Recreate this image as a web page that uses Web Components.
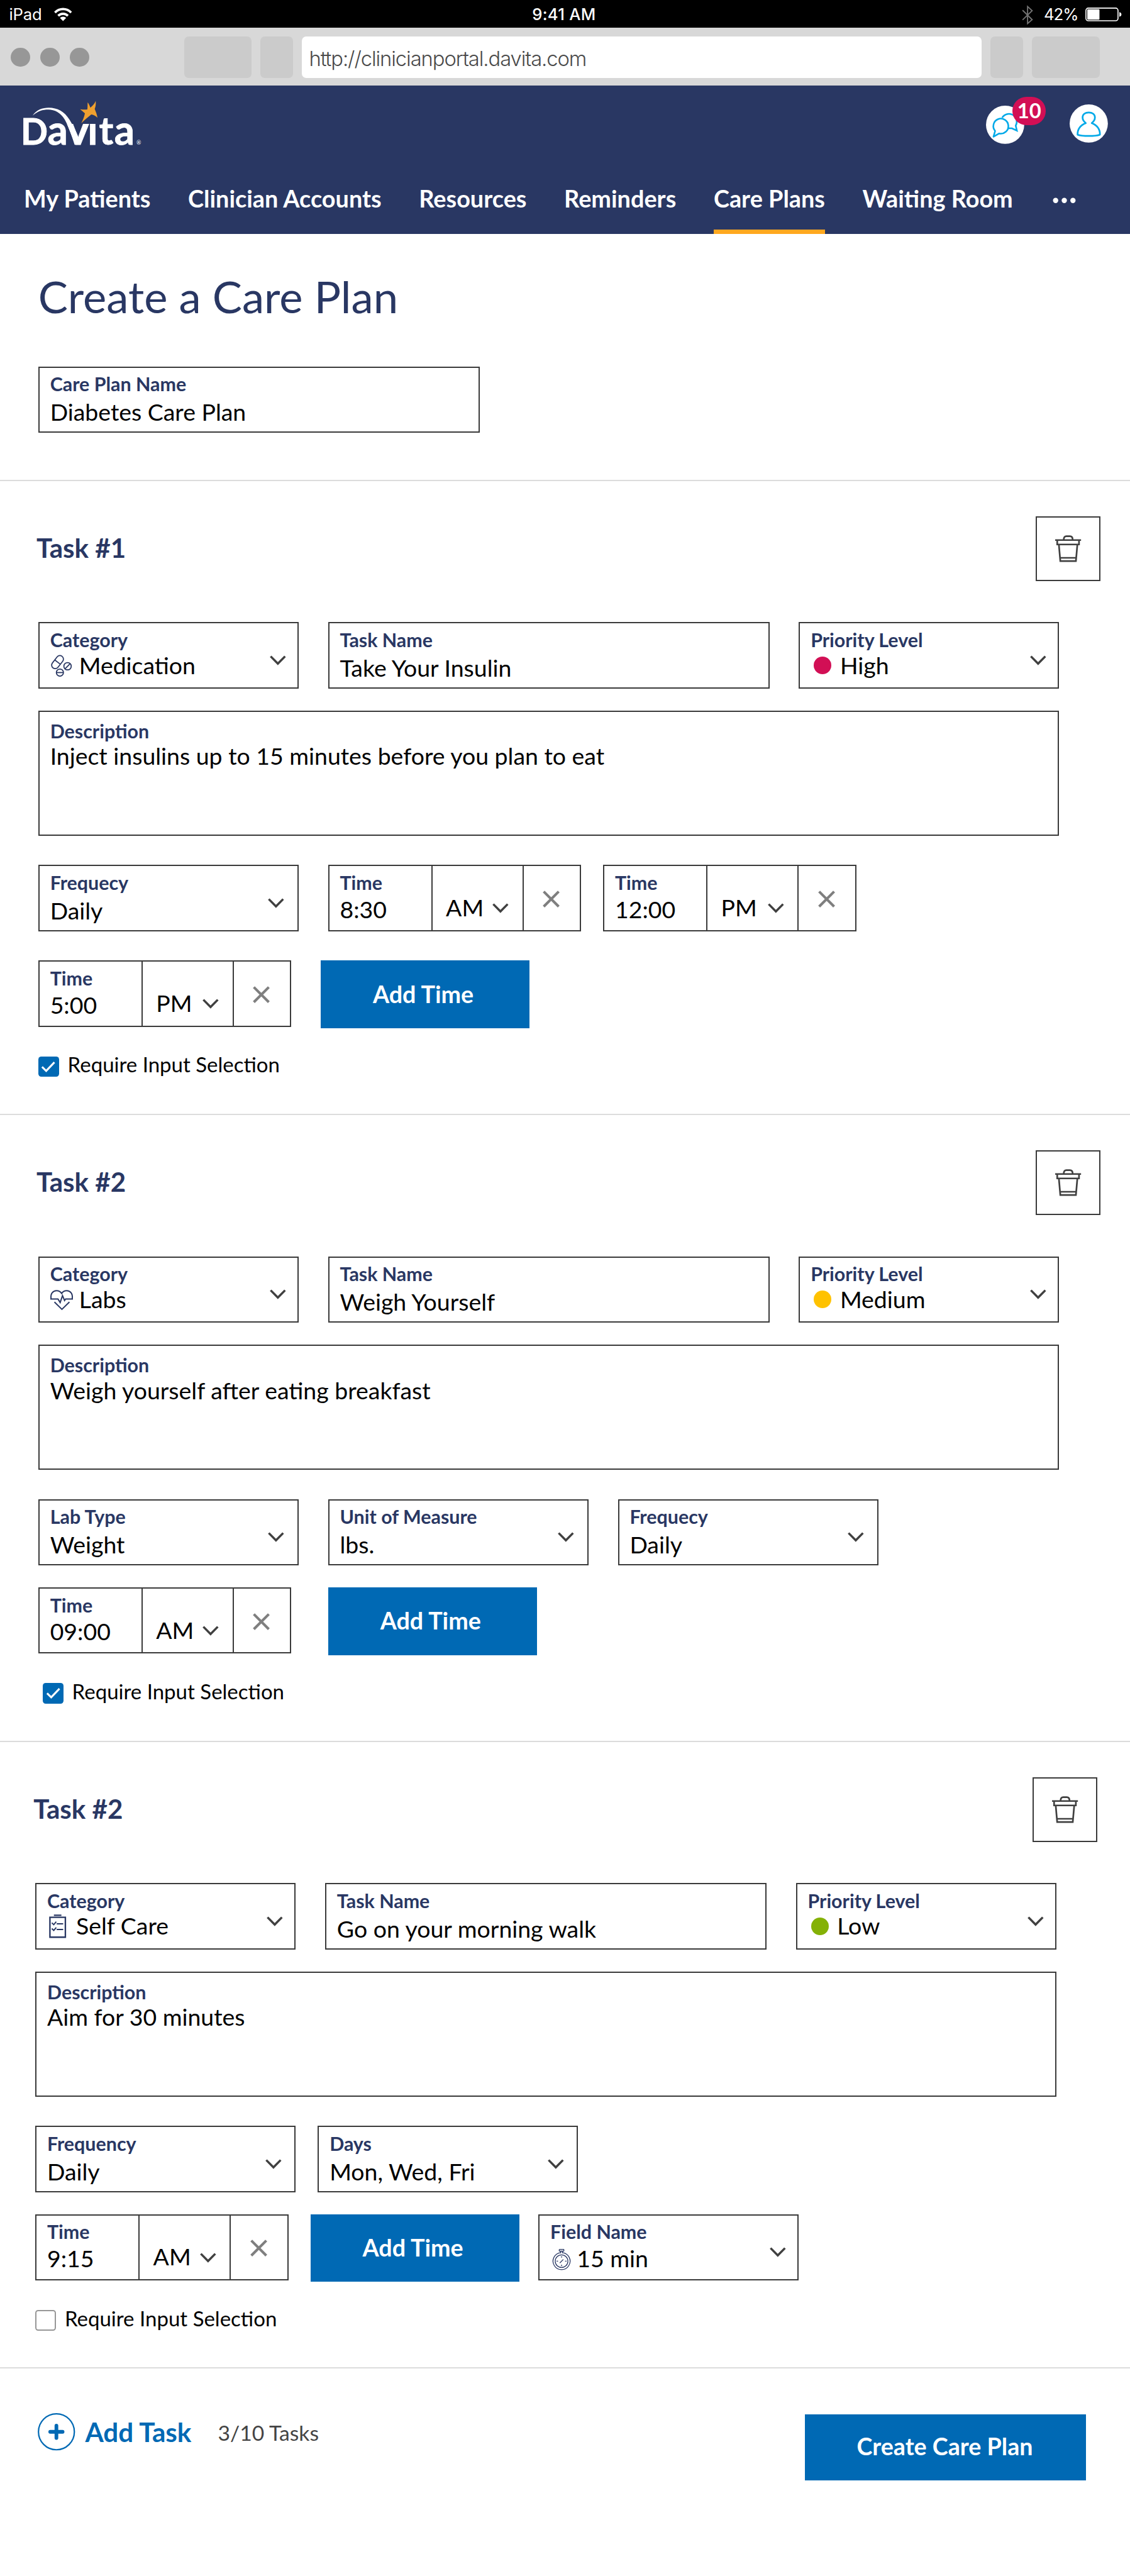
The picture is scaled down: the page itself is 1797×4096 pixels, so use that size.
<!DOCTYPE html>
<html lang="en">
<head>
<meta charset="utf-8">
<title>Create a Care Plan</title>
<style>
  /* 1rem = 10 design pixels on a 768-wide tablet canvas */
  html { font-size: 23.395px; background: #fff; }
  body { margin: 0; height: 4096px; overflow: hidden; font-family: Lato, "Noto Sans", sans-serif; color: #000; }
</style>
</head>
<body>
<status-bar></status-bar>
<browser-bar>http://clinicianportal.davita.com</browser-bar>
<portal-header unread="10">
  <nav-tab>My Patients</nav-tab>
  <nav-tab>Clinician Accounts</nav-tab>
  <nav-tab>Resources</nav-tab>
  <nav-tab>Reminders</nav-tab>
  <nav-tab active>Care Plans</nav-tab>
  <nav-tab>Waiting Room</nav-tab>
</portal-header>

<plan-intro heading="Create a Care Plan">
  <form-field label="Care Plan Name" size="wide">Diabetes Care Plan</form-field>
</plan-intro>

<task-card heading="Task #1" size="tall">
  <form-row top="28">
    <form-field label="Category" kind="select" icon="pills">Medication</form-field>
    <form-field label="Task Name" size="wide">Take Your Insulin</form-field>
    <form-field label="Priority Level" kind="select" dot="#d20f55">High</form-field>
  </form-row>
  <form-row top="15">
    <form-field label="Description" kind="area">Inject insulins up to 15 minutes before you plan to eat</form-field>
  </form-row>
  <form-row top="20">
    <form-field label="Frequecy" kind="select">Daily</form-field>
    <time-field meridiem="AM">8:30</time-field>
    <time-field meridiem="PM" pull="5">12:00</time-field>
  </form-row>
  <form-row top="20">
    <time-field meridiem="PM">5:00</time-field>
    <action-button>Add Time</action-button>
  </form-row>
  <check-option checked>Require Input Selection</check-option>
</task-card>

<task-card heading="Task #2">
  <form-row top="28">
    <form-field label="Category" kind="select" icon="heart">Labs</form-field>
    <form-field label="Task Name" size="wide">Weigh Yourself</form-field>
    <form-field label="Priority Level" kind="select" dot="#ffc200">Medium</form-field>
  </form-row>
  <form-row top="15">
    <form-field label="Description" kind="area">Weigh yourself after eating breakfast</form-field>
  </form-row>
  <form-row top="20">
    <form-field label="Lab Type" kind="select">Weight</form-field>
    <form-field label="Unit of Measure" kind="select">lbs.</form-field>
    <form-field label="Frequecy" kind="select">Daily</form-field>
  </form-row>
  <form-row top="15">
    <time-field meridiem="AM">09:00</time-field>
    <action-button pull="-5">Add Time</action-button>
  </form-row>
  <check-option checked inset>Require Input Selection</check-option>
</task-card>

<task-card heading="Task #2" outdent>
  <form-row top="28">
    <form-field label="Category" kind="select" icon="clipboard">Self Care</form-field>
    <form-field label="Task Name" size="wide">Go on your morning walk</form-field>
    <form-field label="Priority Level" kind="select" dot="#84b106">Low</form-field>
  </form-row>
  <form-row top="15">
    <form-field label="Description" kind="area">Aim for 30 minutes</form-field>
  </form-row>
  <form-row top="20" gap="15">
    <form-field label="Frequency" kind="select">Daily</form-field>
    <form-field label="Days" kind="select">Mon, Wed, Fri</form-field>
  </form-row>
  <form-row top="15" gap="15">
    <time-field meridiem="AM">9:15</time-field>
    <action-button>Add Time</action-button>
    <form-field label="Field Name" kind="select" icon="stopwatch" pull="2">15 min</form-field>
  </form-row>
  <check-option>Require Input Selection</check-option>
</task-card>

<plan-footer count="3/10 Tasks">
  <action-button size="wide">Create Care Plan</action-button>
</plan-footer>

<script>
// Lengths are authored in design pixels with a "u" suffix and emitted as rem.
const units = text => text.replace(/(-?\d*\.?\d+)u\b/g, (_, n) => (n / 10).toFixed(4) + 'rem');

class Base extends HTMLElement {
  connectedCallback() {
    if (this.shadowRoot) return;
    const root = this.attachShadow({ mode: 'open' });
    const pull = this.getAttribute('pull');
    const extra = pull ? `:host{margin-left:${-pull}u}` : '';
    root.innerHTML = units(`<style>*{box-sizing:border-box}:host{display:block;box-sizing:border-box}${this.css()}${extra}</style>`) + this.html();
  }
  attr(name, fallback = '') { return this.getAttribute(name) ?? fallback; }
}

const ICONS = {
  chevron: [11, 6.7, '<path d="M.6 .7 5.5 5.7 10.4 .7" fill="none" stroke="#404040" stroke-width="1.5"/>'],
  close: [11.6, 11.6, '<path d="M.7 .7 10.9 10.9M10.9 .7 .7 10.9" fill="none" stroke="#7f7f7f" stroke-width="1.8"/>'],
  trash: [17.6, 18.2, '<g fill="none" stroke="#404040" stroke-width="1.15"><path d="M0 3.3H17.6M5.8 3.1C5.8 1.3 6.6.7 7.6.7H10C11.1.7 11.9 1.3 11.9 3.1M1.4 3.3V6.3H16.2V3.3M2.5 6.3 3.5 17.6H14.1L15.1 6.3M3.3 15.4H14.3"/></g>'],
  pills: [14, 14, '<g fill="none" stroke="#293763" stroke-width=".75"><rect x="-5" y="-2.4" width="10" height="4.8" rx="2.4" transform="translate(4.5 4.2) rotate(-52)"/><path d="M2.7 2.8 6.5 5.7"/><circle cx="11.3" cy="7" r="2.5"/><path d="M9.6 8.7 13 5.3"/><circle cx="6.1" cy="11.3" r="2.4"/><path d="M3.8 11.3H8.4"/></g>'],
  heart: [15.4, 14, '<g fill="none" stroke="#293763" stroke-width=".85"><path d="M.5 5.8C0 2.4 2 .5 4.2 .5 6 .5 7.1 1.4 7.7 2.4 8.3 1.4 9.4 .5 11.2 .5 13.4 .5 15.4 2.4 14.9 5.8M0 6.2H5.2L6.7 8.6 8.3 3.9 9.7 7.2 10.4 6.2H15.4M2.8 8.2 7.9 13.2 13 8.2"/></g>'],
  clipboard: [12, 16, '<g fill="none" stroke="#293763" stroke-width="1"><path d="M.6 2H11.1V15.5H.6ZM3.3 .6H8.4"/><path d="M1.9 5.7 3.2 7 4.9 5M5.2 6.4H9.6M1.9 9.6 3.2 10.9 4.9 8.9M5.2 10.3H9.6" stroke-width=".85"/></g>'],
  stopwatch: [12, 14.5, '<g fill="none" stroke="#293763" stroke-width=".55"><rect x="4.4" y=".3" width="3.2" height="1.2" rx=".3"/><path d="M5.4 2.5A5.8 5.8 0 1 0 6.6 2.5"/><circle cx="6" cy="8.3" r="4.3"/><path d="M5.4 1.5V2.9M6.6 1.5V2.9M4.8 9.5 7.2 7.1M6 4.9V5.9M6 10.7V11.7M2.6 8.3H3.6M8.4 8.3H9.4"/></g>'],
  check: [10, 8, '<path d="M.8 4 3.6 6.8 9.2 .9" fill="none" stroke="#fff" stroke-width="1.3"/>'],
  plus: [25.4, 25.4, '<circle cx="12.7" cy="12.7" r="12.2" fill="none" stroke="#0069b4" stroke-width=".95"/><path d="M12.7 8.5V16.9M8.5 12.7H16.9" fill="none" stroke="#0069b4" stroke-width="2.5" stroke-linecap="round"/>'],
  wifi: [12.2, 9.2, '<g fill="none" stroke="#fff" stroke-width="1.6"><path d="M.6 3.4A7.6 7.6 0 0 1 11.6 3.4M2.8 5.6A4.6 4.6 0 0 1 9.4 5.6"/></g><path d="M6.1 9.2 4 7.1A3 3 0 0 1 8.2 7.1Z" fill="#fff"/>'],
  bluetooth: [7.6, 12.8, '<path d="M.5 3.1 7 9.5 3.9 12.2V.6L7 3.4 .5 9.7" fill="none" stroke="#737373" stroke-width=".8"/>'],
  battery: [25, 9.4, '<rect x=".4" y=".4" width="21.8" height="8.6" rx="1.6" fill="none" stroke="#fff" stroke-width=".7"/><rect x="1.3" y="1.2" width="8.3" height="7" rx=".5" fill="#fff"/><path d="M23.1 3.1C25 3.6 25 5.8 23.1 6.3Z" fill="#fff"/>'],
  chat: [26, 26, '<circle cx="13" cy="13" r="13" fill="#fff"/><g fill="none" stroke="#00a9e8" stroke-width="1.1"><path d="M11 8.2A5.3 5.3 0 1 1 20.2 13.6L21 17 17.6 15.4H15.3"/><path d="M5.1 21.1 6.2 17.2A5.1 5.1 0 1 1 9 18.9Z" stroke-linejoin="round"/></g>'],
  profile: [26, 26, '<circle cx="13" cy="13" r="13" fill="#fff"/><path d="M11 12.7C9 11.2 8.8 9.6 8.8 8.9 8.8 6.7 10.7 5.5 13 5.5S17.2 6.7 17.2 8.9C17.2 9.6 17 11.2 15 12.7 18.3 14 20.7 16.4 20.6 20.6 17.4 21.7 8.6 21.7 5.4 20.6 5.3 16.4 7.7 14 11 12.7Z" fill="none" stroke="#00a9e8" stroke-width="1.15" stroke-linejoin="round"/>'],
  dots: [16, 4, '<g fill="#fff"><circle cx="2" cy="2" r="1.8"/><circle cx="7.9" cy="2" r="1.8"/><circle cx="13.8" cy="2" r="1.8"/></g>'],
};

customElements.define('ui-icon', class extends Base {
  css() {
    const [w, h] = ICONS[this.attr('name')];
    return `:host{flex:none;width:${w}u;height:${h}u} svg{display:block;width:100%;height:100%;overflow:visible}`;
  }
  html() {
    const [w, h, body] = ICONS[this.attr('name')];
    return `<svg viewBox="0 0 ${w} ${h}">${body}</svg>`;
  }
});

customElements.define('status-bar', class extends Base {
  css() { return `
    :host{height:19u;background:#000;color:#fff;font:400 11u/14u Inter,"Liberation Sans",sans-serif;display:grid;grid-template-columns:1fr auto 1fr;padding:3.1u 5.4u 0 6.2u}
    div{display:flex;align-items:flex-start}
    .l{gap:8.2u;letter-spacing:-.1u}.c{font-weight:500;letter-spacing:.12u;padding-right:2.2u}
    .r{justify-content:flex-end}
    .l ui-icon{margin-top:2.1u}.bt{margin-top:.9u}.pct{margin:0 4.8u 0 7.2u;letter-spacing:-.4u}.bat{margin-top:2.2u}`; }
  html() { return `<div class="l"><span>iPad</span><ui-icon name="wifi"></ui-icon></div><div class="c">9:41 AM</div>
    <div class="r"><ui-icon class="bt" name="bluetooth"></ui-icon><span class="pct">42%</span><ui-icon class="bat" name="battery"></ui-icon></div>`; }
});

customElements.define('browser-bar', class extends Base {
  css() { return `
    :host{height:39u;background:#d8d8d8;display:flex;align-items:flex-start;gap:6u;padding:6u 0 0 7.4u}
    .lights{display:flex;gap:7u;margin:7.3u 58.4u 0 0}
    .lights i{width:13.1u;height:13.1u;border-radius:50%;background:#979797}
    b{width:22.2u;height:28u;border-radius:3u;background:#cbcbcb}
    b.w{width:46u}
    .url{width:462u;height:28u;border-radius:3u;background:#fff;color:#4a4a4a;font:300 14u/20u Inter,"Liberation Sans",sans-serif;letter-spacing:-.46u;padding:5.1u 0 0 4.8u;white-space:nowrap}`; }
  html() { return `<div class="lights"><i></i><i></i><i></i></div><b class="w"></b><b></b><div class="url"><slot></slot></div><b></b><b class="w"></b>`; }
});

customElements.define('davita-logo', class extends Base {
  css() { return `:host{width:81.1u;height:31.1u} svg{display:block;width:100%;height:100%;overflow:visible}
    text{font-family:Lato,sans-serif;font-weight:700;fill:#fff}`; }
  html() { return `<svg viewBox="50 40 730 280">
    <clipPath id="low"><path d="M0 0H295V186H512V0H800V330H0Z"/></clipPath>
    <g clip-path="url(#low)"><text y="314" font-size="245" stroke="#fff" stroke-width="3"><tspan x="38" font-size="218">D</tspan><tspan x="202 304 447">aVi</tspan><tspan x="518" font-size="236">t</tspan><tspan x="611">a</tspan></text></g>
    <path fill="#fff" d="M111 135C135 100 170 87 210 87C262 88 305 108 338 162C355 190 377 232 392 268L376 312L368 314C345 240 325 190 308 160C282 117 245 99 208 99C170 99 145 108 111 135Z"/>
    <path fill="#f0a02f" d="M497 46C499 65 497 80 491 95C499 115 505 130 508 149C495 137 482 130 470 129C450 145 430 162 409 182C418 163 427 145 431 122C422 113 412 106 402 97C418 99 432 100 446 98C448 82 447 68 448 54C456 65 461 75 464 87C478 76 490 64 497 46Z"/>
    <text x="747" y="313" font-size="34" style="font-weight:400">®</text></svg>`; }
});

customElements.define('nav-tab', class extends Base {
  css() {
    const line = this.hasAttribute('active') ? '#ffa81f' : 'transparent';
    return `:host{color:#fff;font:700 16.17u/20u Lato,sans-serif;white-space:nowrap;padding-bottom:10.9u;border-bottom:3u solid ${line}}`;
  }
  html() { return '<slot></slot>'; }
});

customElements.define('portal-header', class extends Base {
  css() { return `
    :host{height:101u;background:#293763;display:flex;flex-direction:column;justify-content:space-between}
    .top{display:flex;align-items:flex-start;padding:9.8u 15u 0 15.56u}
    .chat{position:relative;margin:4.2u 31.1u 0 auto}
    .badge{position:absolute;left:18.2u;top:-6u;width:22.8u;height:19u;border-radius:9.5u;background:#d20f55;color:#fff;font:700 14u/19u Lato,sans-serif;text-align:center}
    .me{margin-top:3.2u}
    nav{display:flex;gap:25.5u;padding-left:16.2u}
    .more{margin:9.1u 0 0 1.5u}`; }
  html() { return `<div class="top"><davita-logo></davita-logo><div class="chat"><ui-icon name="chat"></ui-icon><span class="badge">${this.attr('unread')}</span></div><ui-icon class="me" name="profile"></ui-icon></div>
    <nav><slot></slot><ui-icon class="more" name="dots"></ui-icon></nav>`; }
});

customElements.define('form-field', class extends Base {
  css() {
    const kind = this.attr('kind', 'text');
    const width = kind === 'area' ? 694 : this.attr('size') === 'wide' ? 300 : 177;
    const marked = this.hasAttribute('icon') || this.hasAttribute('dot');
    const lift = this.attr('icon') === 'stopwatch' ? 0 : marked ? -.8 : kind === 'area' ? -.8 : 1.2;
    const nudge = { pills: -.6, heart: -1, clipboard: .2, stopwatch: .6 }[this.attr('icon')] ?? 0;
    const slotWidth = this.attr('icon') === 'stopwatch' ? 18 : 19.7;
    return `
    :host{flex:none;width:${width}u;height:${kind === 'area' ? 85 : 45}u;border:1u solid #3a3a3a;display:flex;justify-content:space-between;padding:${kind === 'area' ? 5.1 : 3.2}u 0 0 7.2u}
    .label{color:#293763;font:700 13u/16u Lato,sans-serif}
    .value{font:400 16u/20u Lato,sans-serif;margin-top:${lift}u;display:flex;white-space:nowrap}
    .mark{flex:none;width:${this.hasAttribute('dot') ? 20 : slotWidth}u}
    .mark ui-icon{margin:${this.attr('icon') === 'clipboard' ? 1.8 : 3.6}u 0 0 ${nudge + 1}u}
    .dot{display:block;width:12u;height:12u;border-radius:50%;margin:3.9u 0 0 2.2u;background:${this.attr('dot', 'none')}}
    .chev{margin:18.3u ${marked ? 7.9 : 8.9}u 0 0}`;
  }
  html() {
    const icon = this.attr('icon');
    const mark = icon ? `<span class="mark"><ui-icon name="${icon}"></ui-icon></span>` : this.hasAttribute('dot') ? '<span class="mark"><i class="dot"></i></span>' : '';
    return `<div><div class="label">${this.attr('label')}</div><div class="value">${mark}<span><slot></slot></span></div></div>` +
      (this.attr('kind') === 'select' ? '<ui-icon class="chev" name="chevron"></ui-icon>' : '');
  }
});

customElements.define('time-field', class extends Base {
  css() { return `
    :host{flex:none;width:172u;height:45u;border:1u solid #3a3a3a;display:flex}
    div{display:flex}
    .t{width:69.2u;flex-direction:column;padding:3.2u 0 0 7.2u}
    .label{color:#293763;font:700 13u/16u Lato,sans-serif}
    .value,.m span{font:400 16u/20u Lato,sans-serif}
    .value{margin-top:.1u}
    .m{width:63u;border:0 solid #3a3a3a;border-width:0 1u;padding:18.2u 9.4u 0 9.2u;justify-content:space-between}
    .m ui-icon{margin-top:7u}
    .x{flex:1;padding:16.5u 0 0 13u}`; }
  html() { return `<div class="t"><span class="label">Time</span><span class="value"><slot></slot></span></div>
    <div class="m"><span>${this.attr('meridiem')}</span><ui-icon name="chevron"></ui-icon></div><div class="x"><ui-icon name="close"></ui-icon></div>`; }
});

customElements.define('action-button', class extends Base {
  css() {
    const wide = this.attr('size') === 'wide';
    return `:host{flex:none;width:${wide ? 191 : 142}u;height:${wide ? 45 : 46}u;background:#0069b4;color:#fff;font:700 16.1u/20u Lato,sans-serif;text-align:center;padding:${wide ? '12.1u .8u 0 0' : '13u 2.6u 0 0'}}`;
  }
  html() { return '<slot></slot>'; }
});

customElements.define('form-row', class extends Base {
  css() {
    const height = this.querySelector('[kind="area"]') ? 85 : 45;
    return `:host{display:flex;align-items:flex-start;height:${height}u;gap:${this.attr('gap', '20')}u;margin-top:${this.attr('top')}u}`;
  }
  html() { return '<slot></slot>'; }
});

customElements.define('check-option', class extends Base {
  css() {
    const on = this.hasAttribute('checked');
    return `
    :host{display:flex;gap:6u;margin:20u 0 0 ${this.hasAttribute('inset') ? 3 : 0}u;height:14u}
    .box{width:14u;height:14u;border-radius:2u;display:flex;align-items:center;justify-content:center;${on ? 'background:#0069b4' : 'border:1u solid #979797'}}
    span{font:400 14.12u/16u Lato,sans-serif;margin-top:-2.2u}`;
  }
  html() { return `<div class="box">${this.hasAttribute('checked') ? '<ui-icon name="check"></ui-icon>' : ''}</div><span><slot></slot></span>`; }
});

customElements.define('trash-button', class extends Base {
  css() { return ':host{width:44u;height:44u;border:1u solid #3a3a3a;padding:12u 0 0 12.2u}'; }
  html() { return '<ui-icon name="trash"></ui-icon>'; }
});

customElements.define('plan-intro', class extends Base {
  css() { return `
    :host{height:167u;padding:23.5u 0 0 26u}
    h1{margin:0;color:#293763;font:400 30.2u/38u Lato,sans-serif}
    .body{margin-top:28.5u}`; }
  html() { return `<h1>${this.attr('heading')}</h1><div class="body"><slot></slot></div>`; }
});

customElements.define('task-card', class extends Base {
  css() { return `
    :host{height:${this.attr('size') === 'tall' ? 431 : 426}u;border-top:1u solid #dcdcdc;padding:24.1u 0 0 ${this.hasAttribute('outdent') ? 24 : 26}u}
    header{display:flex;justify-content:space-between;width:722u;height:44u}
    h2{margin:9.4u 0 0 -1.2u;color:#293763;font:700 18u/24u Lato,sans-serif}`; }
  html() { return `<header><h2>${this.attr('heading')}</h2><trash-button></trash-button></header><slot></slot>`; }
});

customElements.define('plan-footer', class extends Base {
  css() { return `
    :host{height:141u;border-top:1u solid #dcdcdc;display:flex;align-items:flex-start;padding:31u 30u 0 25.5u}
    .add{display:flex;align-items:center;height:24u;gap:7u;color:#0069b4;font:700 18.05u/24u Lato,sans-serif}
    .count{margin:.7u auto 0 18u;color:#444;font:400 14.4u/24u Lato,sans-serif}`; }
  html() { return `<div class="add"><ui-icon name="plus"></ui-icon><span>Add Task</span></div><div class="count">${this.attr('count')}</div><slot></slot>`; }
});
</script>
</body>
</html>
